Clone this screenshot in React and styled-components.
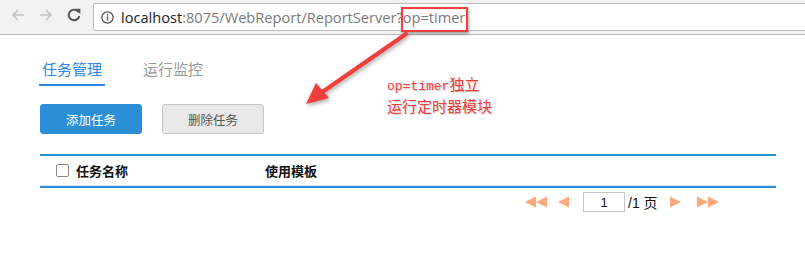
import React from 'react';
import styled, { createGlobalStyle } from 'styled-components';

const GlobalStyle = createGlobalStyle`
  html, body {
    margin: 0;
    background: #fff;
  }
  body {
    font-family: "Noto Sans CJK SC", "Noto Sans", sans-serif;
  }
`;

const blue = '#2b8fd8';
const pagerOrange = '#ffa77c';
const markRed = '#f23d3d';

const Page = styled.div`
  position: relative;
  width: 805px;
  height: 260px;
  overflow: hidden;
`;

/* browser chrome */
const Toolbar = styled.div`
  height: 35px;
  background: #f2f2f2;
  border-bottom: 1px solid #b9b9b9;
  display: flex;
  align-items: flex-start;
  padding-top: 3px;
  box-sizing: border-box;
`;

const NavButtons = styled.div`
  display: flex;
  align-items: center;
  gap: 14px;
  padding: 5px 0 0 11px;
  width: 82px;
`;

const AddressBox = styled.div`
  flex: 1;
  height: 28px;
  margin-right: -10px;
  background: #fff;
  border: 1px solid #bdbdbd;
  border-radius: 2px;
  box-sizing: border-box;
  display: flex;
  align-items: center;
  padding-left: 7px;
  gap: 7px;
  font-family: "Open Sans", "Noto Sans", sans-serif;
  font-size: 14.6px;
  color: #7a7a7a;
  white-space: nowrap;
`;

const Host = styled.span`
  color: #222;
`;

/* report page */
const Main = styled.div`
  padding: 24px 29px 0 40px;
`;

const Tabs = styled.div`
  display: flex;
  gap: 35px;
  margin-left: -1px;
`;

const Tab = styled.div`
  font-size: 15px;
  line-height: 20px;
  padding: 0 3px 5px;
  color: ${({ active }) => (active ? '#2d86e6' : '#999')};
  border-bottom: 2px solid ${({ active }) => (active ? '#2d86e6' : 'transparent')};
`;

const Actions = styled.div`
  display: flex;
  gap: 20px;
  margin-top: 18px;
`;

const ActionButton = styled.div`
  width: 102px;
  height: 30px;
  box-sizing: border-box;
  border-radius: 3px;
  display: flex;
  align-items: center;
  justify-content: center;
  font-size: 12.5px;
  background: ${({ primary }) => (primary ? blue : '#e8e8e8')};
  color: ${({ primary }) => (primary ? '#fff' : '#555')};
  border: 1px solid ${({ primary }) => (primary ? blue : '#c8c8c8')};
`;

const Table = styled.div`
  margin-top: 20px;
  width: 736px;
  border-top: 2px solid ${blue};
  border-bottom: 2px solid ${blue};
`;

const HeadRow = styled.div`
  display: grid;
  grid-template-columns: 225px 1fr;
  height: 29px;
  align-items: center;
  border-bottom: 1px solid #d6e4ef;
  font-size: 13px;
  font-weight: bold;
  color: #111;
`;

const HeadCell = styled.div`
  display: flex;
  align-items: center;
  gap: 7px;
  padding-left: ${({ pad }) => pad}px;
`;

const CheckBox = styled.span`
  width: 11px;
  height: 11px;
  border: 1px solid #888;
  border-radius: 2px;
  background: #fff;
`;

const Pager = styled.div`
  display: flex;
  align-items: center;
  width: 736px;
  justify-content: flex-end;
  padding-right: 57px;
  box-sizing: border-box;
  margin-top: 4px;
  font-size: 13px;
  color: #111;
`;

const PagerIcon = styled.svg`
  display: block;
  margin-right: ${({ gap }) => gap}px;
`;

const PageInput = styled.div`
  width: 42px;
  height: 20px;
  box-sizing: border-box;
  border: 1px solid #c6c6c6;
  display: flex;
  align-items: center;
  justify-content: center;
  font-family: "Liberation Sans", sans-serif;
  font-size: 13px;
  margin-right: 3px;
`;

const PageTotal = styled.span`
  width: 34px;
  margin-right: 8px;
  font-family: "Liberation Sans", "Noto Sans CJK SC", sans-serif;
  font-size: 14px;
`;

/* red markup drawn on top */
const MarkBox = styled.div`
  position: absolute;
  left: 401px;
  top: 7px;
  width: 67px;
  height: 25px;
  box-sizing: border-box;
  border: 2px solid ${markRed};
  box-shadow: 1px 2px 3px rgba(0, 0, 0, 0.35);
`;

const ArrowLayer = styled.svg`
  position: absolute;
  left: 0;
  top: 0;
  pointer-events: none;
  filter: drop-shadow(1px 2px 2px rgba(0, 0, 0, 0.35));
`;

const Note = styled.div`
  position: absolute;
  left: 387px;
  top: 74px;
  color: ${markRed};
  font-size: 15px;
  line-height: 19px;
  text-shadow: 1px 1px 1px rgba(0, 0, 0, 0.2);
`;

const Mono = styled.span`
  font-family: "Liberation Mono", monospace;
  font-size: 13px;
`;

function Arrow({ dir }) {
  // left-pointing triangle, flipped for right
  return (
    <polygon
      points={dir === 'left' ? '0,5.5 11,0 11,11' : '0,0 11,5.5 0,11'}
      fill={pagerOrange}
    />
  );
}

function PagerButton({ dir, double, gap }) {
  return (
    <PagerIcon width={double ? 22 : 12} height="12" viewBox={double ? '0 0 22 12' : '0 0 12 12'} gap={gap}>
      <g transform="translate(0,0.5)">
        <Arrow dir={dir} />
        {double && (
          <g transform="translate(11,0)">
            <Arrow dir={dir} />
          </g>
        )}
      </g>
    </PagerIcon>
  );
}

export default function App() {
  return (
    <Page>
      <GlobalStyle />
      <Toolbar>
        <NavButtons>
          <svg width="14" height="14" viewBox="0 0 14 14">
            <path d="M13 7H2M7 2L2 7l5 5" stroke="#c2c2c2" strokeWidth="1.6" fill="none" />
          </svg>
          <svg width="14" height="14" viewBox="0 0 14 14">
            <path d="M1 7h11M7 2l5 5-5 5" stroke="#c2c2c2" strokeWidth="1.6" fill="none" />
          </svg>
          <svg width="14" height="14" viewBox="0 0 14 14">
            <path d="M11.6 4.2A5.3 5.3 0 1 0 12.3 8" stroke="#555" strokeWidth="2" fill="none" />
            <polygon points="8,0.8 13.4,0.8 13.4,6.2" fill="#555" />
          </svg>
        </NavButtons>
        <AddressBox>
          <svg width="13" height="13" viewBox="0 0 13 13">
            <circle cx="6.5" cy="6.5" r="5.6" stroke="#555" strokeWidth="1.3" fill="none" />
            <rect x="5.8" y="5.4" width="1.4" height="4" fill="#555" />
            <rect x="5.8" y="3.1" width="1.4" height="1.4" fill="#555" />
          </svg>
          <span>
            <Host>localhost</Host>:8075/WebReport/ReportServer?op=timer
          </span>
        </AddressBox>
      </Toolbar>

      <Main>
        <Tabs>
          <Tab active>任务管理</Tab>
          <Tab>运行监控</Tab>
        </Tabs>
        <Actions>
          <ActionButton primary>添加任务</ActionButton>
          <ActionButton>删除任务</ActionButton>
        </Actions>
        <Table>
          <HeadRow>
            <HeadCell pad={16}>
              <CheckBox />
              任务名称
            </HeadCell>
            <HeadCell pad={0}>使用模板</HeadCell>
          </HeadRow>
        </Table>
        <Pager>
          <PagerButton dir="left" double gap={11} />
          <PagerButton dir="left" gap={13} />
          <PageInput>1</PageInput>
          <PageTotal>/1 页</PageTotal>
          <PagerButton dir="right" gap={15} />
          <PagerButton dir="right" double gap={0} />
        </Pager>
      </Main>

      <MarkBox />
      <ArrowLayer width="805" height="260" viewBox="0 0 805 260">
        <line x1="406" y1="34" x2="318" y2="95" stroke={markRed} strokeWidth="4" strokeLinecap="round" />
        <polygon points="306,104 329,98 316,83" fill={markRed} />
      </ArrowLayer>
      <Note>
        <Mono>op=timer</Mono>独立
        <br />
        运行定时器模块
      </Note>
    </Page>
  );
}
